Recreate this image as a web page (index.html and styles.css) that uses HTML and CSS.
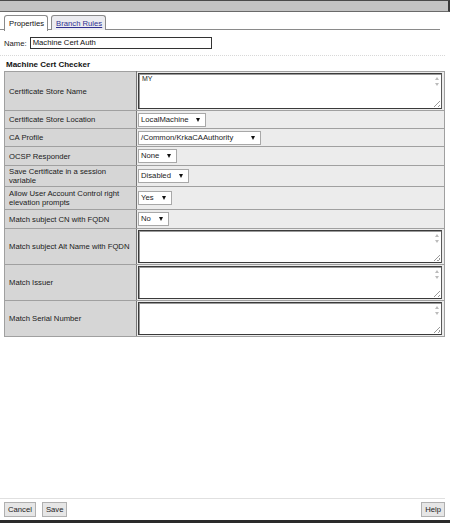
FILE: index.html
```html
<!DOCTYPE html>
<html>
<head>
<meta charset="utf-8">
<link rel="stylesheet" href="styles.css">
</head>
<body>
<div class="page">
  <div class="topbar"></div>
  <div class="tabs">
    <div class="tab active">Properties</div>
    <div class="tab"><a href="#">Branch Rules</a></div>
  </div>
  <div class="namerow">
    <span class="namelabel">Name:</span>
    <div class="nameinput">Machine Cert Auth</div>
  </div>
  <div class="sep"></div>
  <div class="heading">Machine Cert Checker</div>
  <table class="grid">
    <tr class="r-ta1">
      <th>Certificate Store Name</th>
      <td><div class="ta"><span class="tatext">MY</span><div class="sb"><span class="up"></span><span class="dn"></span><span class="grip"></span></div></div></td>
    </tr>
    <tr class="r-sel">
      <th>Certificate Store Location</th>
      <td><div class="sel">LocalMachine<span class="arr"></span></div></td>
    </tr>
    <tr class="r-sel">
      <th>CA Profile</th>
      <td><div class="sel w-ca">/Common/KrkaCAAuthority<span class="arr"></span></div></td>
    </tr>
    <tr class="r-sel2">
      <th>OCSP Responder</th>
      <td><div class="sel">None<span class="arr"></span></div></td>
    </tr>
    <tr class="r-two">
      <th>Save Certificate in a session variable</th>
      <td><div class="sel">Disabled<span class="arr"></span></div></td>
    </tr>
    <tr class="r-two2">
      <th>Allow User Account Control right elevation prompts</th>
      <td><div class="sel">Yes<span class="arr"></span></div></td>
    </tr>
    <tr class="r-sel2">
      <th>Match subject CN with FQDN</th>
      <td><div class="sel">No<span class="arr"></span></div></td>
    </tr>
    <tr class="r-ta">
      <th>Match subject Alt Name with FQDN</th>
      <td><div class="ta"><span class="tatext"></span><div class="sb"><span class="up"></span><span class="dn"></span><span class="grip"></span></div></div></td>
    </tr>
    <tr class="r-ta">
      <th>Match Issuer</th>
      <td><div class="ta"><span class="tatext"></span><div class="sb"><span class="up"></span><span class="dn"></span><span class="grip"></span></div></div></td>
    </tr>
    <tr class="r-ta">
      <th>Match Serial Number</th>
      <td><div class="ta"><span class="tatext"></span><div class="sb"><span class="up"></span><span class="dn"></span><span class="grip"></span></div></div></td>
    </tr>
  </table>
  <div class="spacer"></div>
  <div class="footer">
    <div class="btns">
      <span class="btn">Cancel</span>
      <span class="btn">Save</span>
    </div>
    <span class="btn">Help</span>
  </div>
  <div class="bottombar"></div>
</div>
</body>
</html>
```
FILE: styles.css
```css
html, body {
  margin: 0;
  padding: 0;
  background: #ffffff;
}
body {
  font-family: "Liberation Sans", Arial, sans-serif;
  font-size: 7.7px;
  color: #1a1a1a;
}
.page {
  width: 450px;
  height: 523px;
  display: flex;
  flex-direction: column;
  box-sizing: border-box;
}
.topbar {
  height: 10px;
  background: #c3c3c3;
  border-top: 1px solid #4a4a4a;
  border-bottom: 1px solid #6a6a6a;
  border-right: 2px solid #3a3a3a;
}
.tabs {
  display: flex;
  gap: 3px;
  padding: 3px 0 0 4px;
  margin-right: 10px;
  border-bottom: 1px solid #8a8a8a;
  height: 14px;
}
.tab {
  border: 1px solid #8a8a8a;
  border-bottom: none;
  border-radius: 3px 3px 0 0;
  padding: 3px 3px 0 4px;
  height: 11px;
  background: #ececf0;
  line-height: 9px;
}
.tab.active {
  background: #fff;
  height: 12px;
  margin-bottom: -1px;
  color: #111;
}
.tab a {
  color: #303090;
  text-decoration: underline;
}
.namerow {
  display: flex;
  align-items: center;
  gap: 3px;
  padding: 7px 0 0 4px;
}
.nameinput {
  width: 178px;
  height: 10px;
  line-height: 10px;
  border: 1px solid #333;
  padding-left: 2px;
  color: #111;
}
.sep {
  margin: 6px 5px 0 0;
  border-top: 1px dotted #d8d8d8;
}
.heading {
  font-weight: bold;
  font-size: 8px;
  padding: 4px 0 2px 6px;
  color: #111;
}
.grid {
  border-collapse: collapse;
  margin-left: 4px;
  width: 441px;
  border: 1px solid #a0a0a0;
}
.grid th {
  width: 122px;
  background: #d6d6d6;
  font-weight: normal;
  text-align: left;
  padding: 0 5px 0 4px;
  border: 1px solid #a0a0a0;
  border-right: 1px solid #777;
  line-height: 9px;
}
.grid td {
  background: #ececec;
  border: 1px solid #a0a0a0;
  padding: 1px 2px 1px 1px;
}
.r-ta1 { height: 39px; }
.r-sel { height: 18px; }
.r-sel2 { height: 19px; }
.r-two { height: 21px; }
.r-two2 { height: 23px; }
.r-ta { height: 36px; }
.ta {
  position: relative;
  height: 31px;
  background: #fff;
  border: 1px solid #3a3a3a;
  border-right-color: #5a5a5a;
  box-shadow: inset 1px 1px 0 #9a9a9a;
}
.r-ta1 .ta { height: 34px; }
.tatext {
  display: block;
  padding: 1px 3px;
  font-size: 7px;
  color: #222;
}
.sb {
  position: absolute;
  right: 0;
  top: 0;
  bottom: 0;
  width: 9px;
  display: flex;
  flex-direction: column;
  align-items: center;
  padding-top: 3px;
  gap: 3px;
}
.up, .dn {
  width: 0;
  height: 0;
  border-left: 2px solid transparent;
  border-right: 2px solid transparent;
}
.up { border-bottom: 3px solid #bbb; }
.dn { border-top: 3px solid #bbb; }
.grip {
  position: absolute;
  right: 1px;
  bottom: 1px;
  width: 6px;
  height: 6px;
  background: linear-gradient(135deg, transparent 45%, #999 45%, #999 55%, transparent 55%, transparent 75%, #999 75%, #999 85%, transparent 85%);
}
.sel {
  display: inline-flex;
  align-items: center;
  gap: 8px;
  height: 12px;
  line-height: 12px;
  background: #fff;
  border: 1px solid #a8a8a8;
  padding: 0 5px 0 2px;
  color: #1a1a1a;
}
.sel.w-ca {
  width: 114px;
  justify-content: space-between;
}
.arr {
  width: 0;
  height: 0;
  border-left: 2px solid transparent;
  border-right: 2px solid transparent;
  border-top: 4px solid #111;
}
.spacer { flex: 1; }
.footer {
  display: flex;
  justify-content: space-between;
  align-items: center;
  border-top: 1px solid #e0e0e0;
  margin-right: 5px;
  padding: 3px 0 3px 4px;
}
.btns {
  display: flex;
  gap: 6px;
}
.btn {
  display: inline-block;
  background: #e6e6e6;
  border: 1px solid #b0b0b0;
  padding: 2px 3px;
  line-height: 9px;
  color: #222;
}
.bottombar {
  height: 3px;
  background: #2a2a2a;
}
```
